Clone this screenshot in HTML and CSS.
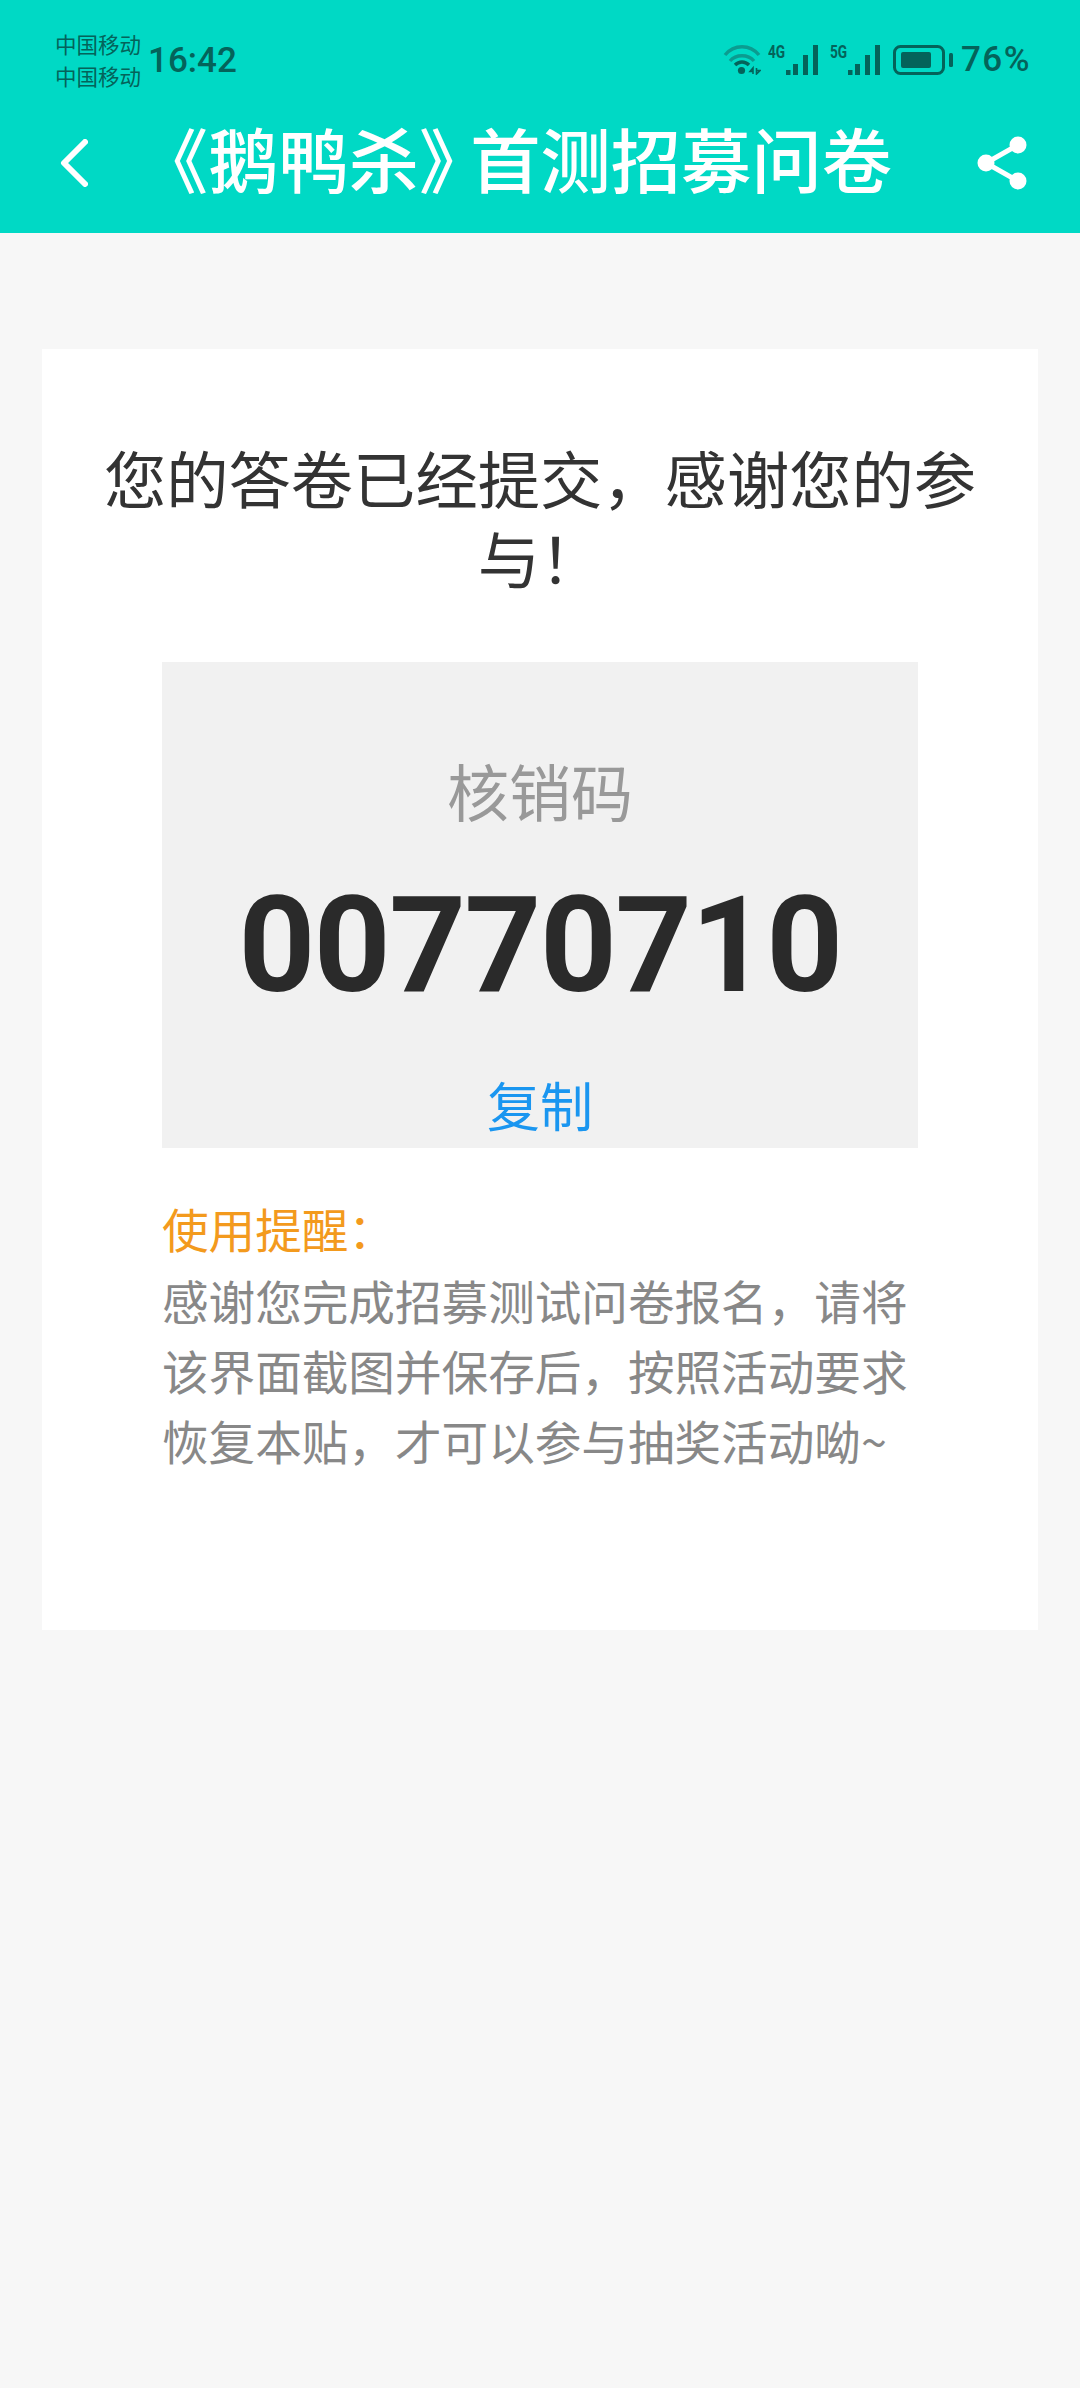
FILE: index.html
```html
<!DOCTYPE html>
<html lang="zh-CN">
  <head>
    <meta charset="UTF-8" />
    <title>《鹅鸭杀》首测招募问卷</title>
    <link rel="stylesheet" href="styles.css">
  </head>

  <body>
    <header class="topbar">
      <div class="status">
        <div class="carrier">
          <span>中国移动</span>
          <span>中国移动</span>
        </div>
        <span class="clock">16:42</span>
        <div class="status-icons">
          <svg class="wifi" width="38" height="30" viewBox="0 0 38 30">
            <path d="M2 10C11 -1 27 -1 36 10" fill="none" stroke="#0b9c90" stroke-width="3.4"/>
            <path d="M7 16C13 9 25 9 31 16" fill="none" stroke="#0b9c90" stroke-width="3.4"/>
            <path d="M12 20C16 16 22 16 26 20" fill="none" stroke="#04635a" stroke-width="3.4"/>
            <circle cx="18.5" cy="25.5" r="3.6" fill="#04635a"/>
            <path d="M30 29V23L27 26.5H30M33.5 23V29L37 25.5H33.5" fill="none" stroke="#04635a" stroke-width="1.6"/>
          </svg>
          <div class="net net-first">
            <span class="net-label">4G</span>
            <svg width="32" height="30" viewBox="0 0 32 30"><path d="M0 25h4.5v5H0zM7 19h5v11H7zM17 10h5v20h-5zM27 0h5v30h-5z" fill="#04635a"/></svg>
          </div>
          <div class="net">
            <span class="net-label">5G</span>
            <svg width="32" height="30" viewBox="0 0 32 30"><path d="M0 25h4.5v5H0zM7 19h5v11H7zM17 10h5v20h-5zM27 0h5v30h-5z" fill="#04635a"/></svg>
          </div>
          <svg class="battery" width="60" height="30" viewBox="0 0 60 30">
            <rect x="1.5" y="1.5" width="49" height="27" rx="6" fill="none" stroke="#04635a" stroke-width="3"/>
            <rect x="8" y="7" width="30" height="16" rx="2" fill="#04635a"/>
            <rect x="56" y="8" width="4" height="14" rx="1.5" fill="#04635a"/>
          </svg>
          <span class="percent">76%</span>
        </div>
      </div>
      <div class="appbar">
        <svg class="back" width="28" height="48" viewBox="0 0 28 48">
          <path d="M25 3L4 24L25 45" fill="none" stroke="#fff" stroke-width="6" stroke-linecap="round" stroke-linejoin="round"/>
        </svg>
        <h1><span class="bracket">《</span>鹅鸭杀<span class="bracket bracket-end">》</span>首测招募问卷</h1>
        <svg class="share" width="50" height="54" viewBox="0 0 50 54">
          <path d="M41 9L9 27L41 45" fill="none" stroke="#fff" stroke-width="5"/>
          <circle cx="41" cy="9" r="8.5" fill="#fff"/>
          <circle cx="9" cy="27" r="8.5" fill="#fff"/>
          <circle cx="41" cy="45" r="8.5" fill="#fff"/>
        </svg>
      </div>
    </header>

    <main class="page">
      <section class="card">
        <h2 class="thanks">您的答卷已经提交，感谢您的参与！</h2>
        <div class="code-box">
          <p class="code-label">核销码</p>
          <p class="code">00770710</p>
          <a class="copy">复制</a>
        </div>
        <div class="notice">
          <p class="notice-title">使用提醒：</p>
          <p class="notice-text">感谢您完成招募测试问卷报名，请将该界面截图并保存后，按照活动要求恢复本贴，才可以参与抽奖活动呦~</p>
        </div>
      </section>
    </main>
  </body>
</html>
```

FILE: styles.css
```css
* {
  box-sizing: border-box;
}

body {
  margin: 0;
  width: 1080px;
  min-height: 2388px;
  background-color: #f7f7f7;
  font-family: "Noto Sans CJK SC", "Roboto", sans-serif;
}

p,
h1,
h2 {
  margin: 0;
  font-weight: 400;
}

.topbar {
  height: 233px;
  background-color: #00d9c5;
}

.status {
  display: flex;
  align-items: center;
  height: 92px;
  padding: 28px 49px 0 55px;
  color: #04635a;
}

.carrier {
  display: flex;
  flex-direction: column;
  font-size: 21.5px;
  line-height: 32px;
}

.clock {
  margin-left: 7px;
  font-family: "Roboto", sans-serif;
  font-size: 35px;
  font-weight: 500;
}

.status-icons {
  display: flex;
  align-items: center;
  margin-left: auto;
  height: 30px;
}

.net {
  display: flex;
  margin-left: 12px;
}

.net-first {
  margin-left: 7px;
}

.net-label {
  width: 18px;
  font-family: "Roboto", sans-serif;
  font-size: 19px;
  font-weight: 700;
  line-height: 14px;
  transform: scaleX(0.72);
  transform-origin: left;
  white-space: nowrap;
}

.battery {
  margin-left: 13px;
}

.percent {
  margin-left: 8px;
  font-family: "Roboto", sans-serif;
  font-size: 35px;
  font-weight: 500;
  line-height: 30px;
  letter-spacing: 1.5px;
}

.appbar {
  display: flex;
  align-items: center;
  height: 141px;
  padding: 0 53px 0 60px;
}

.appbar h1 {
  flex: 1;
  margin-left: 85px;
  padding-bottom: 11px;
  color: #fff;
  font-size: 70.3px;
  font-weight: 500;
  line-height: 90px;
  white-space: nowrap;
}

.bracket {
  font-feature-settings: "halt";
}

.bracket-end {
  margin-right: 16px;
}

.page {
  padding: 116px 42px 0;
}

.card {
  height: 1281px;
  padding: 88px 42px 0;
  background-color: #fff;
}

.thanks {
  color: #333;
  font-size: 62.3px;
  line-height: 80px;
  text-align: center;
}

.code-box {
  display: flex;
  flex-direction: column;
  align-items: center;
  width: 756px;
  height: 486px;
  margin: 65px auto 0;
  padding-top: 84px;
  background-color: #f1f1f1;
}

.code-label {
  color: #999;
  font-size: 62px;
  line-height: 88px;
}

.code {
  margin-top: 45px;
  color: #2a2a2a;
  font-family: "Roboto", sans-serif;
  font-size: 134px;
  font-weight: 700;
  line-height: 134px;
  letter-spacing: -1.5px;
}

.copy {
  margin-top: 53px;
  color: #1a96f0;
  font-size: 53px;
  line-height: 76px;
}

.notice {
  width: 756px;
  margin: 45px auto 0;
  font-size: 46.6px;
}

.notice-title {
  color: #f39a1d;
  line-height: 70px;
}

.notice-text {
  margin-top: 2px;
  color: #888;
  line-height: 70px;
}
```
